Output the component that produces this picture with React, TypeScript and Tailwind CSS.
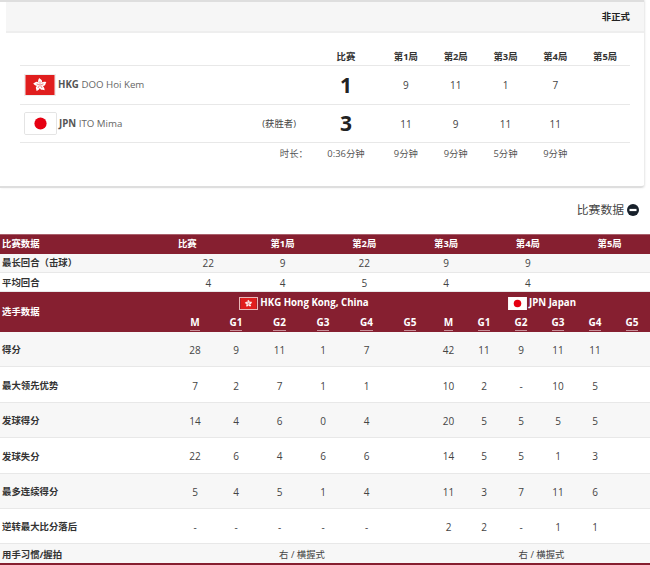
const font = { fontFamily: '"Open Sans", "Noto Sans CJK SC", sans-serif' };

const petals = [0, 72, 144, 216, 288];

function HkFlag(props: { className: string }) {
  return (
    <svg viewBox="0 0 32 22" className={props.className}>
      <rect width="32" height="22" fill="#e01e1e" />
      {petals.map((deg) => (
        <g key={deg} transform={`rotate(${deg} 16 11)`}>
          <path
            d="M16 10.6 C13.6 9.4 13.2 6.2 15.2 3.4 C16 4.6 17.8 5.2 18.2 6.4 C18.6 8 17.4 9.6 16 10.6 Z"
            fill="#fff"
          />
          <path d="M16 9.6 L16 7" stroke="#e01e1e" strokeWidth="0.6" />
        </g>
      ))}
    </svg>
  );
}

function JpFlag(props: { className: string }) {
  return (
    <svg viewBox="0 0 32 22" className={props.className}>
      <rect width="32" height="22" fill="#fff" />
      <circle cx="16" cy="11" r="6.4" fill="#e60012" />
    </svg>
  );
}

const setCols = ["第1局", "第2局", "第3局", "第4局", "第5局"];
const scoreGrid =
  "grid grid-cols-[301px_60px_repeat(5,49.8px)] items-center text-center";

const playerGrid =
  "grid grid-cols-[174px_42px_40px_47px_40px_47px_40px_37px_34px_40px_34px_40px_34px] items-center text-center";

const playerRows: { label: string; values: string[] }[] = [
  { label: "得分", values: ["28", "9", "11", "1", "7", "", "42", "11", "9", "11", "11", ""] },
  { label: "最大领先优势", values: ["7", "2", "7", "1", "1", "", "10", "2", "-", "10", "5", ""] },
  { label: "发球得分", values: ["14", "4", "6", "0", "4", "", "20", "5", "5", "5", "5", ""] },
  { label: "发球失分", values: ["22", "6", "4", "6", "6", "", "14", "5", "5", "1", "3", ""] },
  { label: "最多连续得分", values: ["5", "4", "5", "1", "4", "", "11", "3", "7", "11", "6", ""] },
  { label: "逆转最大比分落后", values: ["-", "-", "-", "-", "-", "", "2", "2", "-", "1", "1", ""] },
];

const gameHeads = ["M", "G1", "G2", "G3", "G4", "G5", "M", "G1", "G2", "G3", "G4", "G5"];

function ScoreRow(props: {
  code: string;
  name: string;
  flag: React.ReactNode;
  note?: string;
  total: string;
  sets: string[];
}) {
  return (
    <div className={`${scoreGrid} h-[38.5px] pt-[1px] border-b border-[#e8e8e8]`}>
      <div className="flex items-center text-left pl-[4px]">
        {props.flag}
        <span className="ml-[2px] text-[9.7px] text-[#666]">
          <b className="font-bold text-[#555]">{props.code}</b> {props.name}
        </span>
        {props.note && (
          <span className="ml-auto pr-[25px] text-[#444]">{props.note}</span>
        )}
      </div>
      <div className="pr-[10px] text-[21px] leading-none font-bold text-[#222]">
        {props.total}
      </div>
      {props.sets.map((s, i) => (
        <div key={i} className="text-[10px] text-[#444]">
          {s}
        </div>
      ))}
    </div>
  );
}

function MatchRow(props: { label: string; values: string[]; bg: string }) {
  return (
    <div
      className={`grid grid-cols-[175px_66.6px_repeat(5,81.8px)] items-center text-center h-[19px] border-b border-[#e8e8e8] ${props.bg}`}
    >
      <div className="pl-[2px] text-left font-bold text-[#333]">{props.label}</div>
      {props.values.map((v, i) => (
        <div key={i} className="text-[10px] text-[#444]">
          {v}
        </div>
      ))}
    </div>
  );
}

export default function App() {
  return (
    <div
      style={font}
      className="w-[650px] h-[565px] overflow-hidden bg-white text-[9.4px] leading-none"
    >
      <section className="w-[644px] h-[188px] border-t-2 border-b-2 border-[#dedede] rounded-br-[3px] shadow-[1px_0_2px_#e5e5e5]">
        <div className="ml-[6px] h-[31px] flex items-center justify-end pr-[14px] bg-[#f6f6f6] border-b-2 border-[#eeeeee] font-bold text-[#222]">
          非正式
        </div>
        <div className="ml-[20px] w-[610px]">
          <div className={`${scoreGrid} h-[33px] border-b border-[#e8e8e8] pt-[15px] font-bold text-[#333]`}>
            <div />
            <div className="pr-[10px]">比赛</div>
            {setCols.map((c) => (
              <div key={c}>{c}</div>
            ))}
          </div>
          <ScoreRow
            code="HKG"
            name="DOO Hoi Kem"
            flag={<HkFlag className="w-[32px] h-[22px] border border-[#eee]" />}
            total="1"
            sets={["9", "11", "1", "7", ""]}
          />
          <ScoreRow
            code="JPN"
            name="ITO Mima"
            flag={<JpFlag className="w-[33px] h-[23px] border border-[#e4e4e4] rounded-[2px]" />}
            note="(获胜者)"
            total="3"
            sets={["11", "9", "11", "11", ""]}
          />
          <div className={`${scoreGrid} h-[21px] text-[#555]`}>
            <div className="text-right pr-[13px]">时长：</div>
            <div className="pr-[10px]">0:36分钟</div>
            <div>9分钟</div>
            <div>9分钟</div>
            <div>5分钟</div>
            <div>9分钟</div>
            <div />
          </div>
        </div>
      </section>

      <div className="h-[44px] flex items-center justify-end gap-[3px] pr-[11px] text-[11.8px] text-[#444]">
        比赛数据
        <svg viewBox="0 0 12 12" className="w-[12px] h-[12px]">
          <circle cx="6" cy="6" r="6" fill="#17202a" />
          <rect x="2.5" y="4.9" width="7" height="2.2" fill="#fff" />
        </svg>
      </div>

      <div className="mt-[2px] grid grid-cols-[133px_108.6px_repeat(5,81.8px)] items-center text-center h-[20px] pb-[1px] bg-[#861f30] border-t border-[#a9606c] font-bold text-white">
        <div className="pl-[2px] text-left">比赛数据</div>
        <div>比赛</div>
        {setCols.map((c) => (
          <div key={c}>{c}</div>
        ))}
      </div>
      <MatchRow
        label="最长回合（击球）"
        values={["22", "9", "22", "9", "9", ""]}
        bg="bg-[#f7f7f7]"
      />
      <MatchRow
        label="平均回合"
        values={["4", "4", "5", "4", "4", ""]}
        bg="bg-white pt-[1px]"
      />

      <div className="h-[40px] bg-[#861f30] text-white font-bold flex items-center">
        <div className="w-[174px] pl-[2px] shrink-0">选手数据</div>
        <div className="flex-1">
          <div className="flex h-[21px] items-center pt-[1px] text-[9.7px]">
            <div className="w-[256px] flex items-center justify-center gap-[2px] pl-[4px]">
              <HkFlag className="w-[19px] h-[13px] border border-[#e9b9b9]" />
              HKG Hong Kong, China
            </div>
            <div className="w-[220px] flex items-center justify-center gap-[2px] pl-[4px]">
              <JpFlag className="w-[19px] h-[13px]" />
              JPN Japan
            </div>
          </div>
          <div className="grid grid-cols-[42px_40px_47px_40px_47px_40px_37px_34px_40px_34px_40px_34px] h-[19px] pb-[2px] items-center text-center text-[10px]">
            {gameHeads.map((g, i) => (
              <div key={i}>
                <span className="border-b border-[#c98f99] pb-[1px]">{g}</span>
              </div>
            ))}
          </div>
        </div>
      </div>

      {playerRows.map((row, i) => (
        <div
          key={row.label}
          className={`${playerGrid} h-[35.4px] pt-[2px] border-b border-[#e8e8e8] ${
            i % 2 == 0 ? "bg-[#f7f7f7]" : "bg-white"
          }`}
        >
          <div className="pl-[2px] text-left font-bold text-[#333]">{row.label}</div>
          {row.values.map((v, j) => (
            <div key={j} className="text-[10px] text-[#444]">
              {v}
            </div>
          ))}
        </div>
      ))}

      <div className="flex items-center h-[21px] pt-[2px] bg-[#f7f7f7] border-b-2 border-[#861f30]">
        <div className="w-[174px] pl-[2px] font-bold text-[#333]">用手习惯/握拍</div>
        <div className="w-[256px] text-center text-[#444]">右 / 横握式</div>
        <div className="w-[220px] pl-[3px] text-center text-[#444]">右 / 横握式</div>
      </div>
    </div>
  );
}
